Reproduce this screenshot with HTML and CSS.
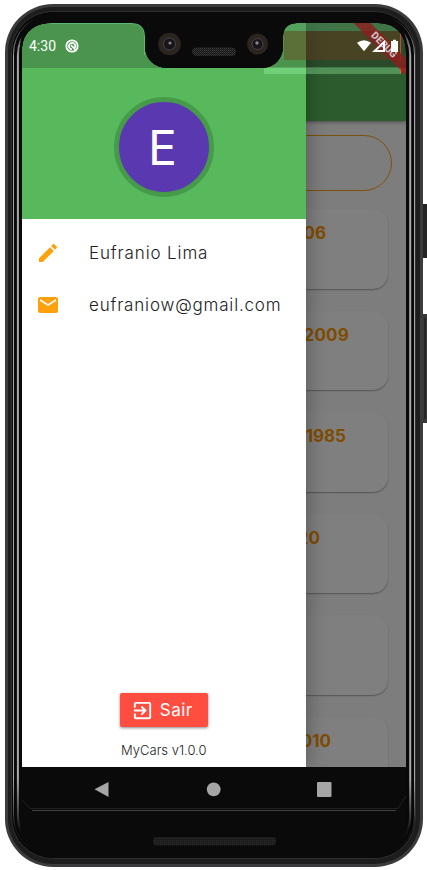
FILE: index.html
```html
<!DOCTYPE html>
<html lang="pt-BR">
<head>
<meta charset="utf-8">
<meta name="viewport" content="width=device-width, initial-scale=1">
<title>MyCars</title>
<link rel="stylesheet" href="styles.css">
</head>
<body>
<div class="phone">
  <main class="screen">
    <section class="page">
      <header class="appbar"></header>
      <div class="search"></div>
      <div class="list">
        <article class="card"><span class="y1">2006</span></article>
        <article class="card"><span class="y2">2009</span></article>
        <article class="card"><span class="y3">1985</span></article>
        <article class="card"><span class="y4">2020</span></article>
        <article class="card"></article>
        <article class="card"><span class="y6">2010</span></article>
      </div>
    </section>
    <div class="scrim"></div>
    <aside class="drawer">
      <div class="account"><div class="avatar"><span>E</span></div></div>
      <div class="row">
        <svg class="icon" viewBox="0 0 24 24"><path d="M3 17.25V21h3.75L17.81 9.94l-3.75-3.75L3 17.25zM20.71 7.04a1 1 0 0 0 0-1.41l-2.34-2.34a1 1 0 0 0-1.41 0l-1.83 1.83 3.75 3.75 1.83-1.83z"/></svg>
        <span class="name">Eufranio Lima</span>
      </div>
      <div class="row">
        <svg class="icon" viewBox="0 0 24 24"><path d="M20 4H4c-1.1 0-2 .9-2 2v12c0 1.1.9 2 2 2h16c1.1 0 2-.9 2-2V6c0-1.1-.9-2-2-2zm0 4-8 5-8-5V6l8 5 8-5z"/></svg>
        <span class="mail">eufraniow@gmail.com</span>
      </div>
      <div class="bottom">
        <button class="exit">
          <svg viewBox="0 0 24 24"><path d="M10.09 15.59 11.5 17l5-5-5-5-1.41 1.41L12.67 11H3v2h9.67zM19 3H5a2 2 0 0 0-2 2v4h2V5h14v14H5v-4H3v4a2 2 0 0 0 2 2h14c1.1 0 2-.9 2-2V5c0-1.1-.9-2-2-2z"/></svg>
          <span>Sair</span>
        </button>
        <p class="version">MyCars v1.0.0</p>
      </div>
    </aside>
    <div class="glare"></div>
    <div class="edge"></div>
    <div class="debug"><span>DEBUG</span></div>
    <div class="status">
      <span class="time">4:30</span>
      <svg class="sync" viewBox="0 0 14 14"><circle cx="7" cy="7" r="5.7"/><path d="M9.8 8.7A3.2 3.2 0 1 0 7 10.2M6 6l5.5 6"/></svg>
      <svg class="signals" viewBox="0 0 44 14"><path d="M0 3.8Q7-1.5 14 3.8L7 12.2z"/><path fill-rule="evenodd" d="M15 13 28 1v12zm5-2h6V5.5z"/><path d="M34 2h2V.8h3V2h2v11h-7z"/></svg>
    </div>
  </main>
  <svg class="body" viewBox="0 0 427 870">
    <defs>
      <pattern id="mesh" width="2" height="2" patternUnits="userSpaceOnUse"><rect width="2" height="2" fill="#151515"/><rect width="1" height="1" fill="#3d3d3d"/><rect x="1" y="1" width="1" height="1" fill="#303030"/></pattern>
      <pattern id="grille" width="2" height="2" patternUnits="userSpaceOnUse"><rect width="2" height="2" fill="#1c1c1c"/><rect width="1" height="1" fill="#292929"/></pattern>
      <linearGradient id="rim" gradientUnits="userSpaceOnUse" x1="0" y1="15" x2="0" y2="855"><stop offset="0" stop-color="#0a0a0a"/><stop offset=".05" stop-color="#a8a8a8"/><stop offset=".91" stop-color="#a8a8a8"/><stop offset=".97" stop-color="#151515"/></linearGradient>
      <clipPath id="cut"><path clip-rule="evenodd" d="M0 0H427V870H0zM22 767V50C22 33 34 23 51 23H131C140 23 145 27 145 37V46C145 58 154 68 168 68H261C275 68 283 58 283 46V37C283 28 288 23 297 23H378C395 23 406 34 406 52V767z"/></clipPath>
    </defs>
    <g clip-path="url(#cut)">
      <path d="M422 204h5v54h-5z" fill="#252525"/><path d="M422 314h5v109h-5z" fill="#393939"/><path d="M425 318v101" stroke="#151515" stroke-width="1"/>
      <rect x="5" y="4" width="418" height="863" rx="48" fill="#3b3b3d"/>
      <rect x="8" y="7" width="412" height="857" rx="45" fill="#1d1d1d"/>
      <rect x="11.5" y="11.5" width="404" height="847" rx="41" fill="#080808" stroke="#303032"/>
      <rect x="13.5" y="14.5" width="401" height="841" rx="39" fill="none" stroke="url(#rim)"/>
      <rect x="17.9" y="17" width="392.3" height="837" rx="38" fill="none" stroke="url(#rim)" stroke-width="2"/>
      <rect x="20" y="13" width="387" height="845" rx="33" fill="#0a0a0a"/>
      <path d="M52 12.5H375v15H52zM60 840H370v18H60z" fill="#0a0a0a"/>
    </g>
    <path d="M51 23.5H131C140 23.5 144.5 27 144.5 37V55" fill="none" stroke="#62c889" stroke-opacity=".7"/>
    <g fill="#2b241f"><circle cx="169.5" cy="44" r="11.3"/><circle cx="257.5" cy="44" r="10.5"/></g>
    <g fill="#171519" stroke="#47444a"><circle cx="169.5" cy="44" r="6"/><circle cx="257.5" cy="44" r="5.5"/></g>
    <g fill="#8d8185"><circle cx="170" cy="43" r="1.6"/><circle cx="257" cy="43" r="1.7"/></g>
    <rect x="192" y="47.5" width="44" height="8.5" rx="4.2" fill="url(#mesh)"/>
    <g fill="#a6a6a6"><path d="M94.5 789.3 108.5 782v15z"/><circle cx="213.7" cy="789.3" r="6.9"/><rect x="317" y="782" width="14.5" height="15" rx="1"/></g>
    <path d="M22 800 30 808.5H398L406 796" fill="none" stroke="#202020"/><path d="M32 810.5H396" stroke="#414141"/>
    <rect x="153" y="837" width="123" height="8.5" rx="4" fill="url(#grille)"/>
  </svg>
</div>
</body>
</html>
```
FILE: styles.css
```css
* { box-sizing: border-box; }
body { margin: 0; background: #fff; overflow: hidden; font-family: Inter, "Open Sans", sans-serif; }
.phone { position: relative; width: 427px; height: 870px; padding: 23px 21px 103px 22px; }
.screen { position: relative; width: 384px; height: 744px; overflow: hidden; background: #fafafa; }
.body { position: absolute; inset: 0; width: 427px; height: 870px; }
.page { display: flex; flex-direction: column; }
.appbar { height: 97.5px; background: #58b95c; box-shadow: 0 1px 4px #0006; }
.search { height: 56px; margin: 14.5px 14px 18px; border: 1px solid #ffa116; border-radius: 28px; }
.list { display: flex; flex-direction: column; gap: 22px; padding: 0 18px; }
.card { height: 79.6px; flex: none; border-radius: 15px; background: #fff; box-shadow: 0 1px 1.5px #0005; padding: 13px 0 0 260px; color: #ff9800; font-size: 17px; line-height: 22px; font-weight: 700; }
.card span { display: block; }
.card .y1 { width: 26px; direction: rtl; }
.card .y2 { width: 49px; letter-spacing: .2px; text-align: right; }
.card .y3 { width: 46px; text-align: right; }
.card .y4 { width: 20px; direction: rtl; }
.card .y6 { width: 31px; direction: rtl; }
.scrim { position: absolute; inset: 0; background: rgba(0,0,0,.5); }
.drawer { position: absolute; left: 0; top: 0; width: 283.6px; height: 744px; background: #fff; box-shadow: 0 0 20px #0005; display: flex; flex-direction: column; }
.account { height: 196px; padding: 74px 0 0 91.5px; background: #58b95c; margin-bottom: 7.6px; }
.avatar { width: 100px; height: 100px; border: 5px solid #459b49; border-radius: 50%; background: #5a38b0; color: #fff; display: flex; align-items: center; justify-content: center; font-size: 48px; line-height: 1; padding: 2px 2px 0 0; }
.row { height: 52px; display: flex; align-items: center; padding-left: 14px; gap: 29px; font-size: 17px; font-weight: 300; color: #222; white-space: nowrap; }
.icon { width: 24px; height: 24px; fill: #ffa10a; flex: none; }
.name { letter-spacing: .87px; }
.mail { letter-spacing: .82px; }
.bottom { margin-top: auto; display: flex; flex-direction: column; align-items: center; padding-bottom: 8px; }
.exit { width: 88px; height: 34px; border: 0; border-radius: 2px; background: #ff4d40; box-shadow: 0 1px 3px #0007; color: #fff; display: flex; align-items: center; gap: 6px; padding: 0 0 0 11px; font: 400 17px Inter, sans-serif; letter-spacing: .5px; }
.exit svg { width: 23px; height: 23px; fill: #fff; flex: none; }
.version { margin: 14px 0 0; font-size: 13px; line-height: 18px; font-weight: 300; color: #222; }
.status { position: absolute; left: 0; right: 0; top: 0; height: 45px; display: flex; align-items: center; padding: 1px 5px 0 7px; background: rgba(30,20,30,.22); color: #fff; font: 14px Roboto, sans-serif; }
.sync { width: 14px; height: 14px; margin-left: 9px; fill: none; stroke: #fff; stroke-width: 1.8; }
.signals { width: 44px; height: 14px; margin-left: auto; fill: #fff; }
.glare { position: absolute; left: 262px; top: 8px; width: 117px; height: 29px; background: #8c401666; border-right: 1px solid #ff5746; box-shadow: 0 -8px 0 #72e18c66; }
.edge { position: absolute; left: 242px; top: 44px; width: 137px; height: 7px; background: #a0ffad55; border-right: 1px solid #ff5746; }
.debug { position: absolute; right: 0; top: 0; width: 60px; height: 60px; overflow: hidden; }
.debug span { position: absolute; left: -7px; top: 16px; width: 90px; height: 12px; background: #b41c1cc4; transform: rotate(45deg); text-align: center; font: 700 10px/12px Roboto, sans-serif; color: #fff; }
```
